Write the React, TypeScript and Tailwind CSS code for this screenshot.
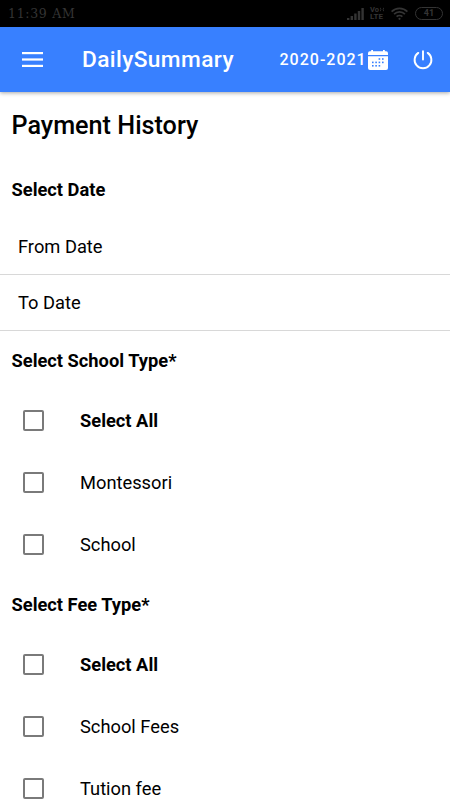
import React from 'react';

const schoolTypes = ['Select All', 'Montessori', 'School'];
const feeTypes = ['Select All', 'School Fees', 'Tution fee'];

const StatusBar = () => (
  <div className="flex h-[27px] items-center justify-between bg-black pr-[7px] pl-2 text-[#343434]">
    <span className="pt-px font-['DejaVu_Serif',serif] text-[12.5px] leading-none tracking-[0.7px]">11:39 AM</span>
    <div className="flex items-center">
      <svg className="mr-[6px] h-[12px] w-[17px]" viewBox="0 0 17 12" fill="currentColor">
        <rect x="0" y="10" width="2.4" height="2" />
        <rect x="3.6" y="8" width="2.4" height="4" />
        <rect x="7.2" y="5.5" width="2.4" height="6.5" />
        <rect x="10.8" y="3" width="2.4" height="9" />
        <rect x="14.4" y="0" width="2.4" height="12" />
      </svg>
      <div className="mr-[7px] flex w-[14px] flex-col font-['Roboto',sans-serif] text-[7.5px] leading-[7px] font-bold">
        <span className="flex h-[6px] items-center">
          Vo
          <svg className="ml-px h-[5px] w-[5px]" viewBox="0 0 5 5" fill="none" stroke="currentColor">
            <path d="M.3.3q1.6 2.2 0 4.4M4.7.3q-1.6 2.2 0 4.4" />
          </svg>
        </span>
        <span className="text-[8px] leading-[8px]">LTE</span>
      </div>
      <svg className="mr-[7px] h-[13px] w-[17px]" viewBox="0 0 17 13" fill="none" stroke="currentColor" strokeWidth="1.7">
        <path d="M.6 4.6a11.2 11.2 0 0 1 15.8 0" />
        <path d="M3.1 7.2a7.6 7.6 0 0 1 10.8 0" />
        <path d="M5.6 9.7a4.1 4.1 0 0 1 5.8 0" />
        <circle cx="8.5" cy="11.8" r="1.1" fill="currentColor" stroke="none" />
      </svg>
      <span className="flex h-[13px] w-[28px] items-center justify-center rounded-full border border-current font-['Roboto',sans-serif] text-[9px] leading-none font-bold">
        41
      </span>
    </div>
  </div>
);

const CalendarIcon = () => (
  <svg className="h-5 w-5 shrink-0" viewBox="0 0 20 20" fill="white">
    <path d="M0 5V3.2Q0 1.3 1.9 1.3H3.2V0H5V1.3H15V0H16.8V1.3H18.1Q20 1.3 20 3.2V5Z" />
    <path d="M0 6.2H20V18Q20 20 18 20H2Q0 20 0 18Z" />
    <g fill="#3880ff">
      <rect x="10.6" y="8.2" width="1.6" height="1.6" />
      <rect x="14" y="8.2" width="1.6" height="1.6" />
      <rect x="4" y="11.6" width="1.6" height="1.6" />
      <rect x="7.3" y="11.6" width="1.6" height="1.6" />
      <rect x="10.6" y="11.6" width="1.6" height="1.6" />
      <rect x="14" y="11.6" width="1.6" height="1.6" />
      <rect x="4" y="15" width="1.6" height="1.6" />
      <rect x="7.3" y="15" width="1.6" height="1.6" />
      <rect x="10.6" y="15" width="1.6" height="1.6" />
    </g>
  </svg>
);

const PowerIcon = () => (
  <svg className="h-5 w-5 shrink-0" viewBox="0 0 20 20" fill="none" stroke="white" strokeWidth="1.9" strokeLinecap="round">
    <path d="M10 1.2V9.5" />
    <path d="M5.3 2.9A8.4 8.4 0 1 0 14.7 2.9" />
  </svg>
);

const Header = () => (
  <header className="flex h-[65px] items-center bg-[#3880ff] pr-[17px] pl-[22px] text-white shadow-[0_1px_4px_rgba(0,0,0,0.35)]">
    <svg className="h-[15px] w-[21px]" viewBox="0 0 21 15" fill="currentColor">
      <rect x="0" y="0" width="21" height="2.2" />
      <rect x="0" y="6.4" width="21" height="2.2" />
      <rect x="0" y="12.8" width="21" height="2.2" />
    </svg>
    <h1 className="ml-[39px] w-[197.5px] pt-0.5 text-[22.7px] leading-none font-medium tracking-[0.4px]">DailySummary</h1>
    <span className="w-[88.5px] text-[16px] leading-none font-medium tracking-[1px] whitespace-nowrap">2020-2021</span>
    <CalendarIcon />
    <div className="ml-auto flex">
      <PowerIcon />
    </div>
  </header>
);

const DateField = ({ label }: { label: string }) => (
  <div className="flex h-14 items-center border-b border-[#d8d8d8] px-[18px] text-[18.3px]">{label}</div>
);

const CheckGroup = ({ title, options }: { title: string; options: string[] }) => (
  <section>
    <h3 className="flex h-[58px] items-center px-[11.5px] pt-0.5 text-[18.3px] font-bold">{title}</h3>
    {options.map((option, index) => (
      <label key={option} className="flex h-[62px] items-center pl-[23px] text-[18.3px]">
        <span className="h-[21px] w-[21px] rounded-[2px] border-2 border-[#7a7a7a]" />
        <span className={index === 0 ? 'ml-[36px] pt-0.5 font-bold' : 'ml-[36px] pt-0.5'}>{option}</span>
      </label>
    ))}
  </section>
);

const App = () => {
  return (
    <div className="h-[800px] w-[450px] overflow-hidden bg-white font-['Roboto',sans-serif] text-black">
      <StatusBar />
      <Header />
      <main>
        <h2 className="flex h-[66px] items-center px-[11.5px] pt-px text-[25.2px] font-medium">Payment History</h2>
        <h3 className="flex h-[61px] items-center px-[11.5px] pt-0.5 text-[18.3px] font-bold">Select Date</h3>
        <DateField label="From Date" />
        <DateField label="To Date" />
        <CheckGroup title="Select School Type*" options={schoolTypes} />
        <CheckGroup title="Select Fee Type*" options={feeTypes} />
      </main>
    </div>
  );
};

export default App;
